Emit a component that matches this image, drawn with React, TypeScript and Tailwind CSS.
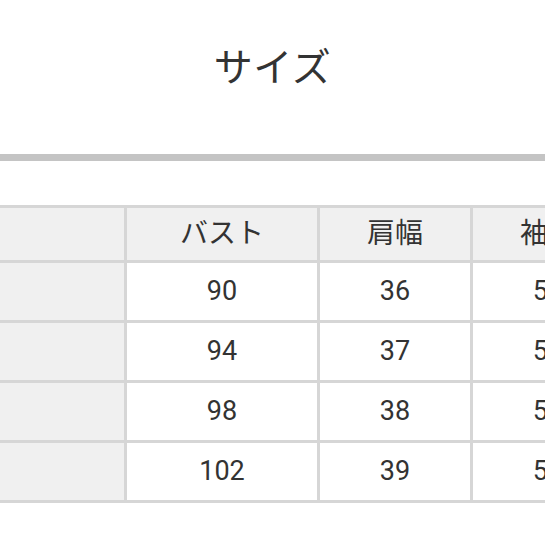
const header = ["", "バスト", "肩幅", "袖丈"];
const rows = [
  ["", "90", "36", "58"],
  ["", "94", "37", "59"],
  ["", "98", "38", "59"],
  ["", "102", "39", "59"],
];

const font = { fontFamily: "Roboto, 'Noto Sans CJK JP', sans-serif" };

export default function App() {
  return (
    <div className="w-[545px] h-[545px] bg-white overflow-hidden text-[#333]" style={font}>
      <div className="h-[154px] flex justify-center pt-[42px]">
        <h1 className="text-[39px] leading-[52px] tracking-[0.5px]">サイズ</h1>
      </div>
      <div className="h-[7px] bg-[#c4c4c4]" />
      <div className="h-[44px]" />
      <div className="grid grid-cols-[124px_190px_150px_150px] gap-[3px] pt-[3px] pb-[3px] bg-[#d6d6d6] w-[623px]">
        {header.map((h, i) => (
          <div
            key={i}
            className="h-[52px] bg-[#f0f0f0] flex items-center justify-center text-[28px]"
          >
            {h}
          </div>
        ))}
        {rows.map((r, ri) =>
          r.map((c, ci) => (
            <div
              key={`${ri}-${ci}`}
              className={`h-[57px] flex items-center justify-center text-[27px] ${
                ci === 0 ? "bg-[#f0f0f0]" : "bg-white"
              }`}
            >
              {c}
            </div>
          ))
        )}
      </div>
    </div>
  );
}
